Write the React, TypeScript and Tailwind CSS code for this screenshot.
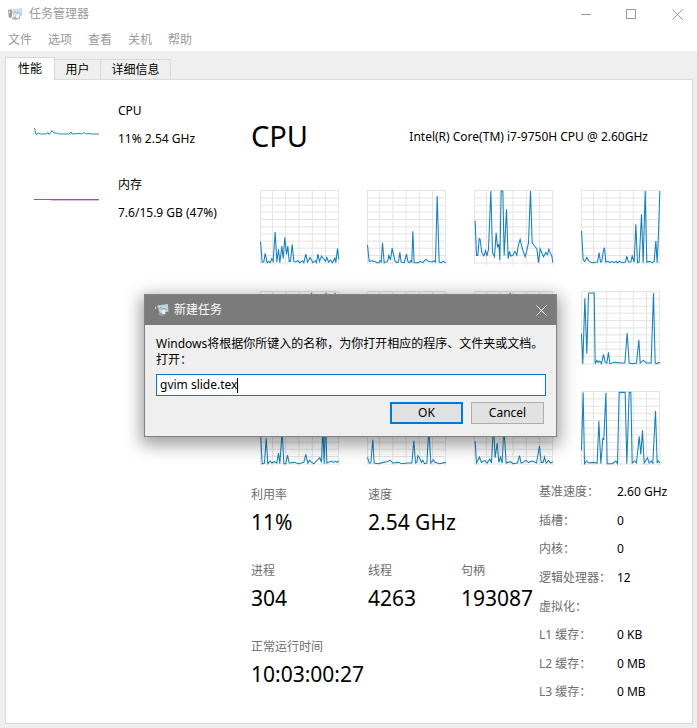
import type { ReactNode } from "react";

// Load samples as "x,height" pairs in thirds of a pixel, measured up from the baseline.
type Samples = string;

const cores: Samples[] = [
  "0,64 5,2 10,2 14,28 20,0 24,4 29,0 34,12 38,4 44,92 49,2 54,40 58,0 64,50 68,12 73,76 78,25 82,50 86,4 90,4 95,55 100,4 105,2 112,6 118,0 126,6 130,0 136,26 141,2 149,16 157,0 164,6 168,0 172,26 177,4 183,20 195,4 199,16 204,2 210,8 216,0 223,14 226,0 231,43 235,10",
  "0,53 5,4 14,6 22,4 28,0 34,0 38,6 41,2 45,60 50,0 60,4 64,22 69,8 74,44 78,26 82,6 88,0 93,2 97,31 101,2 110,0 117,26 121,4 126,0 130,6 133,2 136,94 140,0 152,0 158,4 166,0 171,6 176,10 182,4 194,2 200,6 204,2 209,200 215,2 221,0 227,4 235,0",
  "0,124 2,124 6,22 10,22 14,72 17,70 22,30 28,20 33,36 37,20 42,40 44,90 49,215 54,30 60,18 65,90 69,46 73,56 76,8 80,215 85,215 89,22 96,160 101,12 105,34 109,20 115,22 121,34 127,22 131,50 137,70 144,40 152,18 157,36 162,60 168,215 173,60 180,50 187,42 192,0 197,42 202,30 207,18 214,30 219,24 223,40 228,28 232,20 235,0",
  "0,96 5,8 10,4 16,16 23,4 32,0 48,2 53,30 57,2 61,4 66,38 69,45 73,2 80,4 85,0 92,4 98,0 104,4 108,0 114,4 122,0 132,2 136,20 141,2 148,2 152,20 158,2 163,115 168,0 173,2 180,145 185,0 191,215 196,2 205,4 212,0 218,4 223,65 227,0 231,90 235,215",
  "0,60 6,2 30,6 60,3 120,2 145,5 153,213 158,2 190,6 197,213 203,30 224,213 230,4 235,2",
  "0,20 20,2 60,12 100,3 150,24 158,2 200,5 235,2",
  "0,30 30,2 80,4 101,15 107,213 112,2 160,5 200,4 235,2",
  "0,90 4,0 10,196 16,30 21,210 23,212 38,212 41,0 46,10 50,4 55,8 60,0 66,28 71,4 76,2 81,34 85,0 100,4 120,2 130,2 137,92 143,2 154,0 165,2 172,72 176,2 185,10 195,2 209,2 216,212 221,2 227,0 231,4 235,2",
  "0,95 5,0 12,2 17,76 22,0 29,8 34,2 41,6 49,2 54,32 58,0 65,98 70,0 76,0 81,26 86,2 100,4 115,0 130,4 136,28 142,2 147,10 153,4 160,0 178,18 183,4 187,110 191,0 195,150 199,2 205,4 212,8 219,4 226,8 230,4 235,8",
  "0,20 5,2 10,2 16,72 20,2 32,0 48,4 58,6 68,10 76,2 92,4 104,0 120,2 133,2 139,69 144,2 148,4 151,24 156,18 162,4 166,10 171,0 178,2 184,104 190,2 198,12 202,4 216,0 235,4",
  "0,66 2,66 6,2 15,20 21,4 31,10 38,2 46,14 51,2 57,120 62,18 68,62 73,4 78,20 83,2 88,110 95,2 108,6 115,0 129,2 135,24 140,2 146,4 154,10 162,4 174,8 186,2 195,53 200,4 206,4 210,20 215,2 222,10 228,2 235,6",
  "0,40 5,214 9,0 15,8 22,2 34,4 47,2 52,128 58,0 64,76 67,74 73,212 77,0 92,0 103,8 108,0 113,214 131,214 136,0 143,214 148,214 152,2 160,8 165,2 173,82 178,28 183,100 188,2 198,18 203,2 209,8 214,2 222,158 227,2 230,8 235,2",
];

function CoreGraph({ samples }: { samples: Samples }) {
  const points = samples
    .split(" ")
    .map((pair) => {
      const [x, h] = pair.split(",").map(Number);
      return `${x / 3 + 0.5},${72 - h / 3 + 0.7}`;
    })
    .join(" ");
  return (
    <svg className="block h-[75px] w-[80px]" viewBox="0 0 80 75" fill="none">
      <path
        d="M0 .5H79M0 7.9H79M0 15.2H79M0 22.2H79M0 29.5H79M0 36.9H79M0 43.9H79M0 51.2H79M0 58.2H79M0 65.5H79M0 73H79M.5 0V74M12.5 0V75M25.7 0V75M39 0V75M52.3 0V75M65.5 0V75M78.6 0V75"
        stroke="#e4e4e4"
      />
      <polyline points={points} stroke="#1680ba" strokeWidth="1.05" />
    </svg>
  );
}

function AppIcon() {
  return (
    <svg className="block h-[12px] w-[15px]" viewBox="0 0 15 12">
      <path d="M0 2l4-1v8l-3 1z" fill="#777" />
      <path d="M1 3l1-.4V5L1 5.3z" fill="#ddd" />
      <path d="M3 1.5L14 0l.5 7.5L6 10z" fill="#c4ccd0" />
      <path d="M5 2l8-1v5.5L6 8z" fill="#b7dcf0" />
      <path d="M5 5l2-2 1.5 3L10 4l3 2" stroke="#8095a0" fill="none" strokeWidth=".8" />
      <path d="M4 9.500l8-1.500v2.500L8 12l-4-1z" fill="#999" />
      <path d="M8 6h3v4H8z" fill="#e8f2f7" />
    </svg>
  );
}

function Cross({ className }: { className: string }) {
  return (
    <svg className={className} viewBox="0 0 11 11" fill="none" stroke="currentColor">
      <path d="M.5.5l10 10M10.500.5l-10 10" />
    </svg>
  );
}

function Tab({ children, active, width }: { children: ReactNode; active?: boolean; width: string }) {
  return (
    <div
      className={`${width} ${
        active
          ? "z-10 -mb-px h-[23px] border border-b-0 bg-white pb-px"
          : "h-[20px] border border-b-0 border-l-0 bg-[#efefef] pt-px"
      } flex items-center justify-center border-[#d9d9d9] leading-none`}
    >
      {children}
    </div>
  );
}

function Stat({ label, value, width }: { label: string; value: string; width: string }) {
  return (
    <div className={`${width} h-[76px] whitespace-nowrap`}>
      <div className="h-[18px] text-[12px] leading-[18px] text-[#6d6d6d]">{label}</div>
      <div className="h-[36px] text-[21px] leading-[36px]">{value}</div>
    </div>
  );
}

const details = [
  ["基准速度：", "2.60 GHz"],
  ["插槽：", "0"],
  ["内核：", "0"],
  ["逻辑处理器：", "12"],
  ["虚拟化：", ""],
  ["L1 缓存：", "0 KB"],
  ["L2 缓存：", "0 MB"],
  ["L3 缓存：", "0 MB"],
];

function RunDialog() {
  return (
    <div className="absolute top-[294px] left-[144px] z-20 h-[143px] w-[413px] border border-[#828282] bg-[#efefef] shadow-[0_5px_16px_3px_rgba(0,0,0,0.38)]">
      <div className="flex h-[30px] items-center bg-[#7b7b7b] pr-[9px] pl-[9px] text-white">
        <AppIcon />
        <span className="ml-[5px] flex-1">新建任务</span>
        <Cross className="block size-[11px]" />
      </div>
      <div className="px-[11px] pt-[11px]">
        <p className="h-[16px] leading-[16px] whitespace-nowrap">
          Windows将根据你所键入的名称，为你打开相应的程序、文件夹或文档。
        </p>
        <p className="h-[16px] leading-[16px]">打开：</p>
        <div className="mt-[6px] flex h-[22px] w-[390px] items-center border border-[#0078d7] bg-white pl-[3px]">
          <span>gvim slide.tex</span>
          <span className="h-[15px] w-px bg-black" />
        </div>
        <div className="mt-[6px] flex justify-end gap-[8px] pr-px">
          <button className="flex h-[22px] w-[73px] items-center justify-center border-2 border-[#0078d7] bg-[#e1e1e1]">
            OK
          </button>
          <button className="flex h-[22px] w-[73px] items-center justify-center border border-[#adadad] bg-[#e1e1e1]">
            Cancel
          </button>
        </div>
      </div>
    </div>
  );
}

export default function App() {
  return (
    <div className="relative flex h-[728px] w-[697px] flex-col overflow-hidden bg-[#efefef] font-['Noto_Sans','Noto_Sans_CJK_SC',sans-serif] text-[12px] text-black">
      <header className="h-[51px] shrink-0 bg-white text-[#999]">
        <div className="flex h-[28px] items-center pl-[8px]">
          <span className="opacity-75">
            <AppIcon />
          </span>
          <span className="ml-[6px] flex-1">任务管理器</span>
          <span className="h-px w-[10px] bg-[#999]" />
          <span className="ml-[35px] size-[10px] border border-[#999]" />
          <Cross className="mr-[14px] ml-[36px] block size-[11px]" />
        </div>
        <nav className="flex h-[24px] items-center gap-[16px] pl-[8px]">
          <span>文件</span>
          <span>选项</span>
          <span>查看</span>
          <span>关机</span>
          <span>帮助</span>
        </nav>
      </header>

      <div className="mx-[5px] mt-[6px] flex h-[22px] shrink-0 items-end">
        <Tab active width="w-[50px]">性能</Tab>
        <Tab width="w-[46px]">用户</Tab>
        <Tab width="w-[70px]">详细信息</Tab>
      </div>

      <main className="mr-[4px] mb-[4px] ml-[5px] flex h-[645px] shrink-0 border border-[#d9d9d9] bg-white">
        <aside className="w-[245px] shrink-0 whitespace-nowrap">
          <div className="flex h-[74px] items-start pt-[21px] pl-[28px]">
            <svg className="mt-[25px] block h-[14px] w-[65px]" viewBox="0 0 65 14" fill="none">
              <path
                d="M.5 2L2 8.500L4.500 7L6.500 8H12L14 6.500L15 8.500L16.500 7L18 4.500L20 7L23 7L25 8H35L37 6L38 8L45 7.500L48 8L50 6.500L52 8L55 7.500L57 8H65"
                stroke="#2b8bc2"
              />
            </svg>
            <div className="ml-[19px]">
              <div className="h-[20px] leading-[20px]">CPU</div>
              <div className="mt-[8px] h-[20px] leading-[20px]">11% 2.54 GHz</div>
            </div>
          </div>
          <div className="flex items-start pt-[21px] pl-[28px]">
            <svg className="mt-[23px] block h-[4px] w-[65px]" viewBox="0 0 65 4" fill="none">
              <path d="M0 1.500H65" stroke="#9b4fb4" />
              <path d="M17 2.500H65" stroke="#d9a8e8" strokeWidth=".8" />
            </svg>
            <div className="ml-[19px]">
              <div className="h-[20px] leading-[20px]">内存</div>
              <div className="mt-[8px] h-[20px] leading-[20px]">7.6/15.9 GB (47%)</div>
            </div>
          </div>
        </aside>

        <section className="flex-1">
          <div className="flex h-[110px] items-center justify-between pr-[44px]">
            <h1 className="text-[29px] leading-none font-normal">CPU</h1>
            <span className="pt-[4px] whitespace-nowrap">Intel(R) Core(TM) i7-9750H CPU @ 2.60GHz</span>
          </div>

          <div className="ml-[9px] grid w-[401px] grid-cols-4 gap-x-[27px] gap-y-[25.5px]">
            {cores.map((samples, i) => (
              <CoreGraph key={i} samples={samples} />
            ))}
          </div>

          <div className="flex">
            <div className="w-[288px] pt-[20px]">
              <div className="flex">
                <Stat label="利用率" value="11%" width="w-[117px]" />
                <Stat label="速度" value="2.54 GHz" width="w-[93px]" />
              </div>
              <div className="flex">
                <Stat label="进程" value="304" width="w-[117px]" />
                <Stat label="线程" value="4263" width="w-[93px]" />
                <Stat label="句柄" value="193087" width="w-[78px]" />
              </div>
              <Stat label="正常运行时间" value="10:03:00:27" width="w-[117px]" />
            </div>
            <dl className="mt-[12px] whitespace-nowrap">
              {details.map(([label, value]) => (
                <div key={label} className="flex h-[28.570px] items-center leading-none">
                  <dt className="w-[78px] text-[#6d6d6d]">{label}</dt>
                  <dd>{value}</dd>
                </div>
              ))}
            </dl>
          </div>
        </section>
      </main>

      <RunDialog />
    </div>
  );
}
